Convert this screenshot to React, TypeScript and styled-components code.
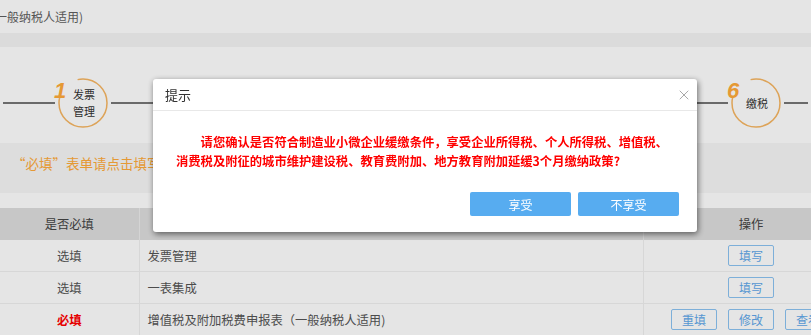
import React from 'react';
import styled, { createGlobalStyle } from 'styled-components';
import { X } from 'lucide-react';

const GlobalStyle = createGlobalStyle`
  html, body {
    margin: 0;
    padding: 0;
    overflow: hidden;
    background: #fff;
  }
  body {
    font-family: "Noto Sans CJK SC", "Microsoft YaHei", "Liberation Sans", sans-serif;
  }
`;

const ORANGE = '#ffab3a';

const Page = styled.div`
  position: relative;
  width: 811px;
  height: 335px;
  overflow: hidden;
  background: #fff;
`;

const TitleRow = styled.div`
  height: 33px;
  display: flex;
  align-items: center;
  font-size: 12px;
  color: #5f5f5f;
  white-space: nowrap;

  span {
    margin-left: -5px;
  }
`;

const Band = styled.div`
  height: 14px;
  background: #f4f4f4;
`;

const StepsBar = styled.div`
  height: 96px;
  box-sizing: border-box;
  padding-top: 31px;
`;

const StepRow = styled.div`
  display: flex;
  align-items: center;
  height: 50px;
`;

const Connector = styled.div<{ $w?: number }>`
  height: 2px;
  background: #777;
  margin: 0 3px;
  ${({ $w }) => ($w ? `width: ${$w}px; flex: none;` : 'flex: 1;')}
`;

const StepCircle = styled.div`
  position: relative;
  flex: none;
  width: 50px;
  height: 50px;
  display: flex;
  align-items: center;
  justify-content: center;
`;

const Ring = styled.svg`
  position: absolute;
  inset: 0;
`;

const StepNo = styled.span`
  position: absolute;
  left: -4px;
  top: 2px;
  font-family: "Liberation Sans", Arial, sans-serif;
  font-style: italic;
  font-weight: bold;
  font-size: 22px;
  line-height: 22px;
  color: ${ORANGE};
`;

const StepLabel = styled.span`
  position: relative;
  font-size: 11px;
  line-height: 17px;
  color: #333;
  text-align: center;
  white-space: pre-line;
  margin-left: 2px;
`;

const Notice = styled.div`
  height: 50px;
  box-sizing: border-box;
  padding: 10px 0 0 12px;
  background: #f6f6f6;
  color: ${ORANGE};
  font-size: 13.5px;
  line-height: 20px;
  white-space: nowrap;
`;

const Spacer = styled.div`
  height: 15px;
`;

const Table = styled.table`
  width: 859px;
  table-layout: fixed;
  border-collapse: collapse;
  font-size: 12.3px;
  color: #555;
`;

const Th = styled.th`
  height: 32px;
  padding: 0;
  background: #dedede;
  font-weight: normal;
  color: #444;
  border-right: 1px solid #ececec;
`;

const Td = styled.td<{ $align?: string }>`
  height: 31px;
  padding: 0 8px;
  text-align: ${({ $align }) => $align || 'left'};
  border-bottom: 1px solid #f0f0f0;
  border-right: 1px solid #f0f0f0;
  white-space: nowrap;
`;

const Need = styled.span<{ $required?: boolean }>`
  color: ${({ $required }) => ($required ? '#f00' : '#555')};
  font-weight: ${({ $required }) => ($required ? 'bold' : 'normal')};
`;

const Ops = styled.div`
  display: flex;
  justify-content: center;
  gap: 11px;
`;

const OpButton = styled.button`
  width: 46px;
  height: 21px;
  padding: 0;
  border: 1px solid #8cc3f2;
  border-radius: 2px;
  background: transparent;
  color: #5fa8ea;
  font-family: inherit;
  font-size: 12px;
  line-height: 19px;
`;

const Mask = styled.div`
  position: fixed;
  inset: 0;
  background: rgba(0, 0, 0, 0.1);
`;

const Dialog = styled.div`
  position: fixed;
  left: 153px;
  top: 79px;
  width: 544px;
  height: 153px;
  box-sizing: border-box;
  background: #fff;
  border-radius: 3px;
  box-shadow: 1px 2px 6px rgba(0, 0, 0, 0.55);
  display: flex;
  flex-direction: column;
`;

const DialogHeader = styled.div`
  height: 31px;
  flex: none;
  display: flex;
  align-items: center;
  justify-content: space-between;
  padding: 0 5px 0 12px;
  border-bottom: 1px solid #e8e8e8;
  font-size: 13px;
  color: #333;
`;

const CloseIcon = styled(X)`
  color: #9a9a9a;
`;

const DialogBody = styled.p`
  margin: 0;
  padding: 22px 23px 0 23px;
  color: #ff0000;
  font-size: 12.3px;
  font-weight: bold;
  line-height: 19px;
  text-indent: 2em;
`;

const DialogFooter = styled.div`
  margin-top: auto;
  display: flex;
  justify-content: flex-end;
  gap: 7px;
  padding: 0 18px 16px 0;
`;

const PrimaryButton = styled.button`
  width: 101px;
  height: 24px;
  padding: 0;
  border: none;
  border-radius: 2px;
  background: #57acf0;
  color: #fff;
  font-family: inherit;
  font-size: 12px;
`;

// only the first and last steps show; the dialog hides the rest
const steps = [
  { no: '1', label: '发票\n管理' },
  { no: '6', label: '缴税' },
];

const rows = [
  { required: false, name: '发票管理', ops: ['填写'] },
  { required: false, name: '一表集成', ops: ['填写'] },
  { required: true, name: '增值税及附加税费申报表（一般纳税人适用)', ops: ['重填', '修改', '查看'] },
];

// ring is open at the upper left, where the step number sits
const C = 2 * Math.PI * 24;
const dash = `${(195 / 360) * C} ${(60 / 360) * C} ${(105 / 360) * C} 0`;

const Step = ({ no, label }: { no: string; label: string }) => (
  <StepCircle>
    <Ring width="50" height="50" viewBox="0 0 50 50">
      <circle cx="25" cy="25" r="24" fill="none" stroke="#f7b662" strokeWidth="1.5" strokeDasharray={dash} />
    </Ring>
    <StepNo>{no}</StepNo>
    <StepLabel>{label}</StepLabel>
  </StepCircle>
);

const App = () => (
  <Page>
    <GlobalStyle />
    <TitleRow>
      <span>一般纳税人适用)</span>
    </TitleRow>
    <Band />
    <StepsBar>
      <StepRow>
        <Connector $w={52} />
        {steps.map((s, i) => (
          <React.Fragment key={s.no}>
            <Step no={s.no} label={s.label} />
            {i < steps.length - 1 ? <Connector /> : <Connector $w={24} />}
          </React.Fragment>
        ))}
      </StepRow>
    </StepsBar>
    <Notice>“必填”表单请点击填写，“选填”表单可根据实际情况填写。</Notice>
    <Spacer />
    <Table>
      <colgroup>
        <col style={{ width: 139 }} />
        <col style={{ width: 504 }} />
        <col style={{ width: 216 }} />
      </colgroup>
      <thead>
        <tr>
          <Th>是否必填</Th>
          <Th>表单名称</Th>
          <Th>操作</Th>
        </tr>
      </thead>
      <tbody>
        {rows.map((r) => (
          <tr key={r.name}>
            <Td $align="center">
              <Need $required={r.required}>{r.required ? '必填' : '选填'}</Need>
            </Td>
            <Td>{r.name}</Td>
            <Td $align="center">
              <Ops>
                {r.ops.map((o) => (
                  <OpButton key={o}>{o}</OpButton>
                ))}
              </Ops>
            </Td>
          </tr>
        ))}
      </tbody>
    </Table>
    <Mask />
    <Dialog>
      <DialogHeader>
        <span>提示</span>
        <CloseIcon size={16} strokeWidth={1.3} />
      </DialogHeader>
      <DialogBody>
        请您确认是否符合制造业小微企业缓缴条件，享受企业所得税、个人所得税、增值税、消费税及附征的城市维护建设税、教育费附加、地方教育附加延缓3个月缴纳政策?
      </DialogBody>
      <DialogFooter>
        <PrimaryButton>享受</PrimaryButton>
        <PrimaryButton>不享受</PrimaryButton>
      </DialogFooter>
    </Dialog>
  </Page>
);

export default App;
